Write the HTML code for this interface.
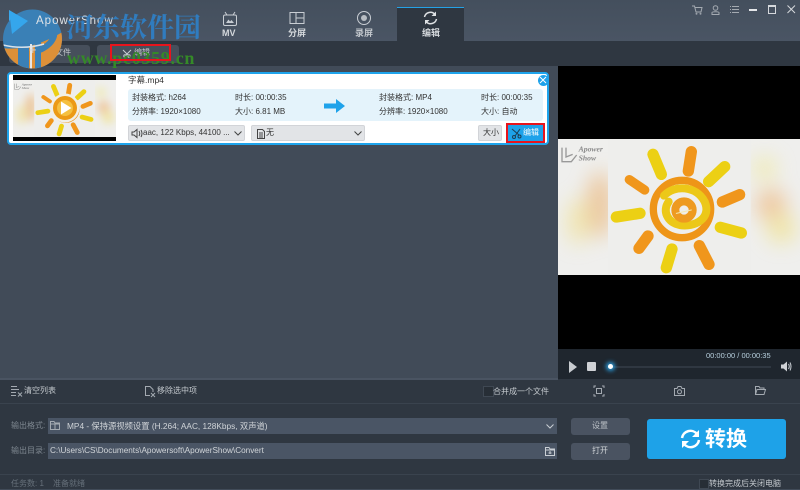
<!DOCTYPE html>
<html><head><meta charset="utf-8">
<style>
html,body{margin:0;padding:0;}
body{width:800px;height:489px;overflow:hidden;position:relative;background:#414b58;font-family:"Liberation Sans","Noto Sans CJK SC",sans-serif;font-size:8px;color:#333;}
.a{position:absolute;white-space:nowrap;}
.t{position:absolute;white-space:nowrap;line-height:12px;}
svg{position:absolute;overflow:visible;}
.ic{fill:none;stroke:#c9ced4;stroke-width:1;}
.d{stroke:#444;}
.g{stroke:#a4aab1;}
</style></head><body>
<svg width="0" height="0" style="position:absolute"><defs>
<filter id="bl" x="-80%" y="-80%" width="260%" height="260%"><feGaussianBlur stdDeviation="30"/></filter>
<clipPath id="cp"><rect x="0" y="12" width="726" height="408"/></clipPath>
<symbol id="sun" viewBox="0 12 726 408" preserveAspectRatio="none">
<g clip-path="url(#cp)">
<rect x="0" y="12" width="726" height="408" fill="#efefed"/>
<g filter="url(#bl)" opacity=".62">
<ellipse cx="125" cy="210" rx="40" ry="100" fill="#eab070"/>
<ellipse cx="60" cy="260" rx="35" ry="70" fill="#f0e090"/>
<ellipse cx="640" cy="210" rx="45" ry="50" fill="#eeb070"/>
<ellipse cx="670" cy="280" rx="45" ry="45" fill="#f0e080"/>
<ellipse cx="620" cy="100" rx="35" ry="35" fill="#f0e890"/>
</g>
<rect x="150" y="12" width="428" height="408" fill="#eeeeec"/>
<g fill="none" stroke-linecap="round">
<g stroke="#ecd014" stroke-width="34">
<path d="M285 58L310 118"/><path d="M500 95L452 140"/><path d="M487 277L550 294"/><path d="M342 342L325 398"/><path d="M246 235L175 246"/>
</g>
<g stroke="#f0961c" stroke-width="34">
<path d="M400 50L391 108"/><path d="M545 179L493 201"/><path d="M424 332L453 388"/><path d="M270 303L243 340"/>
</g>
<path d="M214 134L260 165" stroke="#f0961c" stroke-width="28"/>
<circle cx="372" cy="222" r="86" stroke="#ee9518" stroke-width="22"/>
<path d="M318 182C350 148 415 152 440 200C462 250 410 278 365 270C328 262 312 228 332 200" stroke="#ecc818" stroke-width="24"/>
<circle cx="378" cy="225" r="26" stroke="#ee9a20" stroke-width="24"/>
<path d="M355 235L400 225" stroke="#f5e8b0" stroke-width="3"/>
</g>
<text x="62" y="50" font-size="23" fill="#8a8a8a" font-family="Liberation Serif,serif" font-style="italic" font-weight="bold">Apower</text>
<text x="62" y="76" font-size="23" fill="#8a8a8a" font-family="Liberation Serif,serif" font-style="italic" font-weight="bold">Show</text>
<path d="M12 38V80H40L56 60M24 38V66L44 58" fill="none" stroke="#999" stroke-width="4"/>
</g>
</symbol>
</defs></svg>

<!-- top bar -->
<div class="a" style="left:0;top:0;width:800px;height:41px;background:linear-gradient(#444f5d,#4a5564);"></div>
<div class="a" style="left:0;top:41px;width:800px;height:25px;background:#2f3741;"></div>

<!-- app logo -->
<svg style="left:9px;top:10px" width="14" height="18" viewBox="0 0 14 18"><path d="M0 0L14 9L0 18Z" fill="#3ea8ea"/></svg>

<!-- tabs -->
<div class="a" style="left:397px;top:7px;width:67px;height:34px;background:#2f3741;border-top:1px solid #25a2e6;box-sizing:border-box;"></div>
<svg style="left:222px;top:11px" width="16" height="16" viewBox="0 0 16 16"><rect x="1.500" y="4" width="13" height="10.500" rx="1.500" class="ic"/><path d="M5 4L3 1M11 4L13 1" class="ic"/><path d="M4 12L6.500 8.500L8 10.500L9.500 9L12 12Z" fill="#c9ced4"/></svg>
<div class="t" style="left:222px;top:27px;font-size:9px;font-weight:bold;color:#d4d8dc;">MV</div>
<svg style="left:289px;top:11px" width="16" height="13" viewBox="0 0 16 13"><rect x="1" y="1.500" width="14" height="11" class="ic"/><path d="M7 1.500V12.500M7 7H15" class="ic"/></svg>
<div class="t" style="left:288px;top:27px;font-size:9px;font-weight:bold;color:#d4d8dc;">分屏</div>
<svg style="left:356px;top:10px" width="16" height="16" viewBox="0 0 16 16"><circle cx="8" cy="8" r="6.500" class="ic"/><circle cx="8" cy="8" r="3" fill="#b8bdc3"/></svg>
<div class="t" style="left:355px;top:27px;font-size:9px;font-weight:bold;color:#c2c7cc;">录屏</div>
<svg style="left:423px;top:11px" width="15" height="14" viewBox="0 0 15 14"><path d="M1.500 6A6 6 0 0 1 12 3.500M13.500 8A6 6 0 0 1 3 10.500" fill="none" stroke="#dfe2e5" stroke-width="1.500"/><path d="M13 0.500V5H8.500ZM2 13.500V9H6.500Z" fill="#dfe2e5"/></svg>
<div class="t" style="left:422px;top:27px;font-size:9px;font-weight:bold;color:#d4d8dc;">编辑</div>

<!-- window controls -->
<svg style="left:692px;top:5px" width="11" height="10" viewBox="0 0 11 10"><path d="M0 1H2.500L4 7H9L10 2.500H3" class="ic g"/><circle cx="4.500" cy="8.800" r="1" fill="#9aa1a9"/><circle cx="8.500" cy="8.800" r="1" fill="#9aa1a9"/></svg>
<svg style="left:711px;top:5px" width="9" height="10" viewBox="0 0 9 10"><circle cx="4.500" cy="3" r="2.300" class="ic g"/><path d="M1 9.500V7.500C1 6.500 8 6.500 8 7.500V9.500Z" class="ic g"/></svg>
<svg style="left:730px;top:6px" width="9" height="7" viewBox="0 0 9 7"><path d="M2 .5H9M2 3.500H9M2 6.500H9M0 .5H1M0 3.500H1M0 6.500H1" class="ic g"/></svg>
<div class="a" style="left:749px;top:9px;width:8px;height:1.500px;background:#e5e7ea;"></div>
<div class="a" style="left:768px;top:5px;width:6px;height:6px;border:1px solid #d5d8dc;border-top:2px solid #d5d8dc;box-sizing:content-box;"></div>
<svg style="left:787px;top:5px" width="9" height="9" viewBox="0 0 9 9"><path d="M.5 .5L8 8M8 .5L.5 8" fill="none" stroke="#d5d8dc"/></svg>

<!-- toolbar buttons under watermark -->
<div class="a" style="left:9px;top:45px;width:81px;height:18px;background:#464f5b;border-radius:3px;"></div>
<div class="a" style="left:97px;top:45px;width:82px;height:18px;background:#464f5b;border-radius:3px;"></div>
<div class="t" style="left:39px;top:47px;font-size:8px;color:#c6cace;">添加文件</div>
<svg style="left:122px;top:49px" width="10" height="9" viewBox="0 0 10 9"><path d="M1 1L6 6M9 1L4 6" class="ic"/><circle cx="3" cy="7" r="1.200" class="ic"/><circle cx="7" cy="7" r="1.200" class="ic"/></svg>
<div class="t" style="left:134px;top:47px;font-size:8px;color:#c6cace;">编辑</div>

<!-- left list area -->
<div class="a" style="left:0;top:66px;width:558px;height:313px;background:#414b58;"></div>
<div class="a" style="left:7px;top:72px;width:542px;height:73px;box-sizing:border-box;background:#fff;border:2px solid #1ea4ec;border-radius:4px;"></div>
<div class="a" style="left:13px;top:75px;width:103px;height:66px;background:#000;"></div>
<svg style="left:13px;top:80px" width="103" height="57"><use href="#sun" width="103" height="57"/></svg>
<svg style="left:50px;top:93px" width="30" height="30" viewBox="0 0 30 30"><circle cx="15" cy="15" r="14.500" fill="#f2efe6"/><circle cx="15" cy="15" r="12" fill="#ec9a16"/><circle cx="15" cy="15" r="8" fill="#f5c040"/><path d="M11 8.500L21.500 15L11 21.500Z" fill="#fff"/></svg>
<div class="t" style="left:128px;top:74px;font-size:8.500px;color:#333;">字幕.mp4</div>
<div class="a" style="left:128px;top:89px;width:415px;height:32px;background:#e4f3fb;border-radius:3px;"></div>
<div class="t" style="left:132px;top:92px;">封装格式: h264</div>
<div class="t" style="left:132px;top:106px;">分辨率: 1920×1080</div>
<div class="t" style="left:235px;top:92px;">时长: 00:00:35</div>
<div class="t" style="left:235px;top:106px;">大小: 6.81 MB</div>
<svg style="left:324px;top:99px" width="21" height="14" viewBox="0 0 21 14"><path d="M0 4.500H12V0L21 7L12 14V9.500H0Z" fill="#1ea2ea"/></svg>
<div class="t" style="left:379px;top:92px;">封装格式: MP4</div>
<div class="t" style="left:379px;top:106px;">分辨率: 1920×1080</div>
<div class="t" style="left:481px;top:92px;">时长: 00:00:35</div>
<div class="t" style="left:481px;top:106px;">大小: 自动</div>
<div class="a" style="left:537.500px;top:74.500px;width:11px;height:11px;border-radius:50%;background:#1ea2ea;"></div>
<svg style="left:540px;top:77px" width="6" height="6" viewBox="0 0 6 6"><path d="M0 0L6 6M6 0L0 6" stroke="#fff" stroke-width="1"/></svg>

<div class="a" style="left:128px;top:125px;width:117px;height:16px;background:#e2e4e7;border:1px solid #d2d4d8;box-sizing:border-box;border-radius:2px;"></div>
<svg style="left:132px;top:129px" width="11" height="9" viewBox="0 0 11 9"><path d="M0 3H2L5 .5V8.500L2 6H0Z" class="ic d"/><path d="M7 2Q8.500 4.500 7 7M9 1Q11 4.500 9 8" class="ic d"/></svg>
<div class="t" style="left:143px;top:127px;color:#333;">aac, 122 Kbps, 44100 ...</div>
<svg style="left:234px;top:131px" width="8" height="5" viewBox="0 0 8 5"><path d="M.5 .5L4 4L7.500 .5" class="ic d"/></svg>
<div class="a" style="left:251px;top:125px;width:114px;height:16px;background:#e2e4e7;border:1px solid #d2d4d8;box-sizing:border-box;border-radius:2px;"></div>
<svg style="left:257px;top:129px" width="8" height="10" viewBox="0 0 8 10"><path d="M.5 .5H5.500L7.500 2.500V9.500H.5Z M2 4H6M2 6H6M2 8H6" class="ic d"/></svg>
<div class="t" style="left:266px;top:127px;color:#333;">无</div>
<svg style="left:354px;top:131px" width="8" height="5" viewBox="0 0 8 5"><path d="M.5 .5L4 4L7.500 .5" class="ic d"/></svg>
<div class="a" style="left:478px;top:125px;width:24px;height:16px;background:#e2e4e7;border:1px solid #d2d4d8;box-sizing:border-box;border-radius:2px;"></div>
<div class="t" style="left:483px;top:127px;color:#333;">大小</div>
<div class="a" style="left:506px;top:123px;width:39px;height:20px;box-sizing:border-box;border:2px solid #e8141c;background:#1ea2ea;"></div>
<svg style="left:511px;top:128px" width="11" height="11" viewBox="0 0 11 11"><path d="M1 1L8 7M9 1L4 8" fill="none" stroke="#1c3d55"/><circle cx="3" cy="9" r="1.500" fill="none" stroke="#1c3d55"/><circle cx="8.500" cy="8.500" r="1.500" fill="none" stroke="#1c3d55"/></svg>
<div class="t" style="left:523px;top:127px;color:#fff;">编辑</div>

<!-- preview -->
<div class="a" style="left:558px;top:66px;width:242px;height:283px;background:#000;"></div>
<svg style="left:558px;top:139px" width="242" height="136"><use href="#sun" width="242" height="136"/></svg>
<div class="a" style="left:558px;top:349px;width:242px;height:30px;background:#1f262e;"></div>
<div class="t" style="left:706px;top:350px;font-size:7.500px;color:#b8d0de;">00:00:00 / 00:00:35</div>
<svg style="left:569px;top:361px" width="8" height="12" viewBox="0 0 8 12"><path d="M0 0L8 6L0 12Z" fill="#c8ccd0"/></svg>
<div class="a" style="left:587px;top:362px;width:9px;height:9px;background:#cfd2d6;border-radius:1px;"></div>
<div class="a" style="left:610px;top:366px;width:161px;height:2px;background:#2f3741;"></div>
<div class="a" style="left:608px;top:364px;width:5px;height:5px;border-radius:50%;background:#fff;box-shadow:0 0 4px 2px #2a9fe0;"></div>
<svg style="left:781px;top:361px" width="11" height="11" viewBox="0 0 11 11"><path d="M0 3.500H2.500L6 .5V10.500L2.500 7.500H0Z" fill="#cfd2d6"/><path d="M7.500 3Q9 5.500 7.500 8M9 1.500Q11 5.500 9 9.500" class="ic"/></svg>

<!-- bottom -->
<div class="a" style="left:0;top:379px;width:800px;height:110px;background:#2f3741;"></div>
<div class="a" style="left:0;top:378px;width:558px;height:2px;background:#4a5462;"></div>
<div class="a" style="left:0;top:403px;width:800px;height:1px;background:#3a434e;"></div>
<div class="a" style="left:0;top:474px;width:800px;height:1px;background:#3a434e;"></div>

<svg style="left:11px;top:386px" width="11" height="11" viewBox="0 0 11 11"><path d="M0 .5H6M0 3.500H8M0 6.500H5M0 9.500H5M7 6.500L11 10.500M11 6.500L7 10.500" class="ic g"/></svg>
<div class="t" style="left:24px;top:385px;color:#c3c8cd;">清空列表</div>
<svg style="left:145px;top:386px" width="10" height="11" viewBox="0 0 10 11"><path d="M5 9.500H.5V.5H5L8 3.500V6" class="ic g"/><path d="M6 7L10 11M10 7L6 11" class="ic g"/></svg>
<div class="t" style="left:157px;top:385px;color:#c3c8cd;">移除选中项</div>
<div class="a" style="left:483px;top:386px;width:9px;height:9px;background:#272e36;border:1px solid #3f4853;"></div>
<div class="t" style="left:493px;top:386px;color:#c3c8cd;">合并成一个文件</div>
<svg style="left:594px;top:386px" width="10" height="10" viewBox="0 0 10 10"><path d="M0 2V0H2M8 0H10V2M10 8V10H8M2 10H0V8" class="ic g"/><rect x="2.500" y="2.500" width="5" height="5" class="ic g"/></svg>
<svg style="left:674px;top:386px" width="11" height="10" viewBox="0 0 11 10"><path d="M.5 2.500H3L4 .5H7L8 2.500H10.500V9.500H.5Z" class="ic g"/><circle cx="5.500" cy="5.800" r="2" class="ic g"/></svg>
<svg style="left:755px;top:386px" width="11" height="9" viewBox="0 0 11 9"><path d="M.5 8.500V.5H4L5 2H9V3.500M.5 8.500H9L10.500 3.500H2L.5 8.500Z" class="ic g"/></svg>

<div class="t" style="left:11px;top:420px;color:#7e8790;">输出格式:</div>
<div class="a" style="left:48px;top:418px;width:509px;height:16px;background:#4a5565;"></div>
<svg style="left:50px;top:421px" width="10" height="9" viewBox="0 0 10 9"><path d="M.5 .5H4L5 2H9.500V8.500H.5Z M.5 3H9.500M5 3V8.500" class="ic g"/></svg>
<div class="t" style="left:67px;top:420px;color:#d0d4d8;font-size:8.300px;">MP4 - 保持源视频设置 (H.264; AAC, 128Kbps, 双声道)</div>
<svg style="left:546px;top:424px" width="8" height="5" viewBox="0 0 8 5"><path d="M.5 .5L4 4L7.500 .5" class="ic"/></svg>
<div class="t" style="left:11px;top:445px;color:#7e8790;">输出目录:</div>
<div class="a" style="left:48px;top:443px;width:509px;height:16px;background:#4a5565;"></div>
<div class="t" style="left:50px;top:445px;color:#d0d4d8;font-size:8.200px;">C:\Users\CS\Documents\Apowersoft\ApowerShow\Convert</div>
<svg style="left:545px;top:447px" width="10" height="9" viewBox="0 0 10 9"><path d="M.5 .5H4L5 2H9.500V8.500H.5Z M.5 3H9.500M5 4V7M3.500 6H6.500" class="ic"/></svg>

<div class="a" style="left:571px;top:418px;width:59px;height:17px;background:#4a5361;border-radius:3px;"></div>
<div class="t" style="left:592px;top:420px;color:#bcc1c6;">设置</div>
<div class="a" style="left:571px;top:443px;width:59px;height:17px;background:#4a5361;border-radius:3px;"></div>
<div class="t" style="left:592px;top:445px;color:#d0d4d8;">打开</div>

<div class="a" style="left:647px;top:419px;width:139px;height:40px;background:#1ea2e8;border-radius:3px;"></div>
<svg style="left:680px;top:429px" width="21" height="20" viewBox="0 0 21 20"><path d="M2 9A8.500 8.500 0 0 1 17 5M19 11A8.500 8.500 0 0 1 4 15" fill="none" stroke="#fff" stroke-width="2.500"/><path d="M19 1V8H12ZM2 19V12H9Z" fill="#fff"/></svg>
<div class="t" style="left:705px;top:429px;font-size:21px;line-height:21px;font-weight:bold;color:#fff;">转换</div>

<div class="t" style="left:11px;top:478px;color:#66707a;">任务数: 1</div>
<div class="t" style="left:53px;top:478px;color:#66707a;">准备就绪</div>
<div class="a" style="left:699px;top:479px;width:8px;height:8px;background:#272e36;border:1px solid #3f4853;"></div>
<div class="t" style="left:709px;top:478px;color:#c3c8cd;">转换完成后关闭电脑</div>

<!-- watermark -->
<svg style="left:0;top:0" width="70" height="70" viewBox="0 0 70 70">
<defs><clipPath id="lc"><circle cx="32.500" cy="39" r="29.500"/></clipPath></defs>
<g clip-path="url(#lc)">
<rect x="0" y="0" width="70" height="70" fill="#3a80b6"/>
<path d="M2 48Q30 52 66 30V72H2Z" fill="#dd9038"/>
<path d="M21 44L26 40V70H21ZM38 70V24Q56 24 54 36Q52 44 40 50" fill="none" stroke="#3a80b6" stroke-width="6"/>
<path d="M3 45Q24 50 44 44" fill="none" stroke="#d8e2ea" stroke-width="1.500"/>
<path d="M31 44V70" stroke="#e4e6e8" stroke-width="2"/>
</g>
<path d="M9 10L28 21L12 34Z" fill="#35a6ec"/>
</svg>
<div class="t" style="left:36px;top:15px;font-size:11.500px;color:#dfe3e7;letter-spacing:1px;">ApowerShow</div>
<div class="t" style="left:29px;top:44px;font-size:13px;color:#cfd3d7;">+</div>
<div class="t" style="left:66px;top:13px;font-size:27px;line-height:30px;font-weight:bold;color:#2f7fc4;font-family:'Liberation Serif','Noto Serif CJK SC',serif;opacity:.95;">河东软件园</div>
<div class="t" style="left:67px;top:51px;font-size:18px;line-height:14px;font-weight:bold;color:#358a28;font-family:'Liberation Serif',serif;letter-spacing:.7px;">www.pc0359.cn</div>
<div class="a" style="left:110px;top:44px;width:61px;height:17px;box-sizing:border-box;border:2px solid #e8141c;"></div>
</body></html>
